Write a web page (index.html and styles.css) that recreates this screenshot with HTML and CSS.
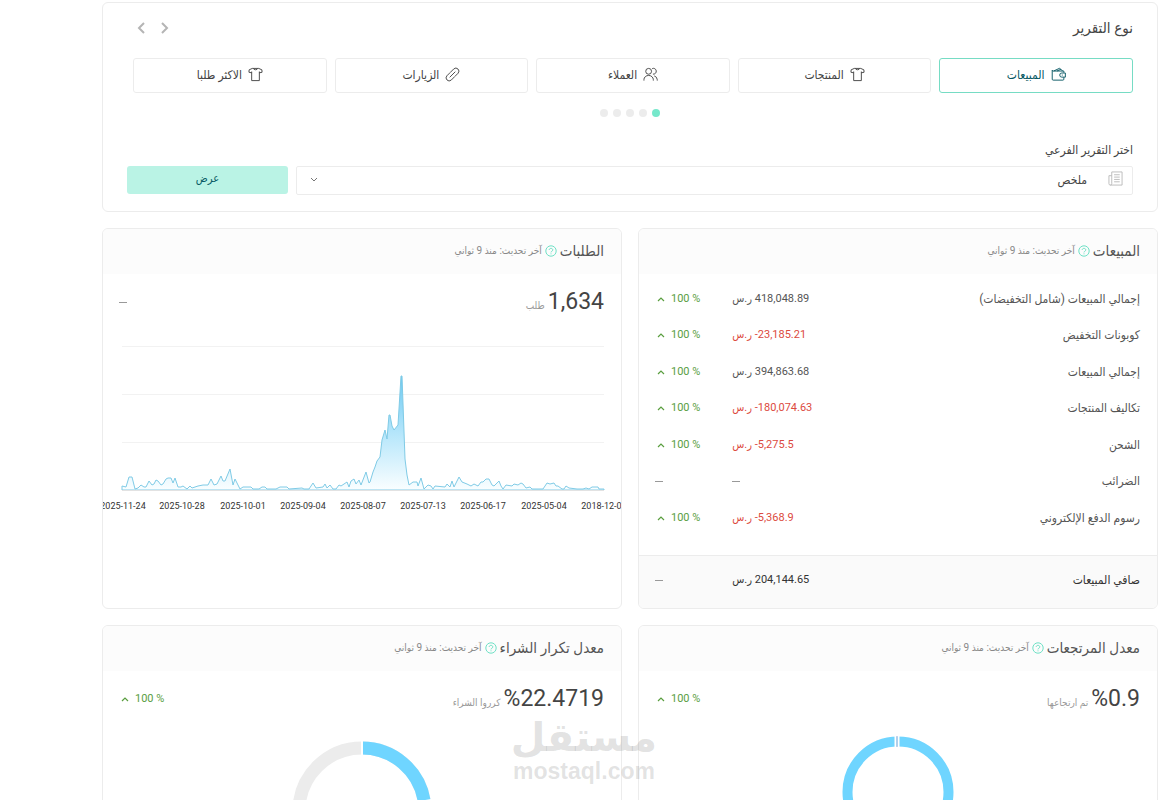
FILE: index.html
```html
<!DOCTYPE html>
<html lang="ar" dir="rtl">
<head>
<meta charset="utf-8">
<title>التقارير</title>
<link rel="stylesheet" href="styles.css">
</head>
<body>
<svg class="defs" aria-hidden="true">
  <symbol id="shirt" viewBox="0 0 16 16"><path d="M4.600 1.500 1.200 3 1 5.600 3.900 6.200V14.500H12.100V6.200L15 5.600 14.800 3 11.400 1.500zM5.600 1.600C6 3.400 10 3.400 10.400 1.600M3.900 4.800v1.600M12.100 4.800v1.600"/></symbol>
  <symbol id="help" viewBox="0 0 12 12"><circle cx="6" cy="6" r="5.2"/><path d="M4.2 5C4.2 2.8 7.8 2.8 7.8 5 7.8 6.2 6 6.1 6 7.4M6 8.4v.9"/></symbol>
  <symbol id="up" viewBox="0 0 8 6"><path d="M1 5 4 2l3 3"/></symbol>
</svg>
<main class="page">
  <section class="card filter">
    <header class="filter-head">
      <h1 class="filter-title">نوع التقرير</h1>
      <div class="arrows">
        <button class="arrow" aria-label="السابق"><svg class="arrow-icon" viewBox="0 0 10 14"><path d="m2 2 5 5-5 5"/></svg></button>
        <button class="arrow" aria-label="التالي"><svg class="arrow-icon" viewBox="0 0 10 14"><path d="M8 2 3 7l5 5"/></svg></button>
      </div>
    </header>
    <div class="types">
      <button class="type active"><svg class="type-icon" viewBox="0 0 16 16"><path d="M13.700 6V4.300H2.200a.9.900 0 0 1-.9-.9V13q0 1 1 1H12.700q1 0 1-1v-2M3 4.200 9 1.400l3.500 2.700M6.500 4.200 10.500 2.400M15.300 6.400h-3.800a2.200 2.200 0 0 0 0 4.400h3.800zM11.500 8.600h1"/></svg>المبيعات</button>
      <button class="type"><svg class="type-icon"><use href="#shirt"/></svg>المنتجات</button>
      <button class="type"><svg class="type-icon" viewBox="0 0 16 16"><circle cx="6" cy="4.600" r="3.100"/><path d="M1 14.500V13.500a5 4.500 0 0 1 10 0V14.500M9.800 1.700a3.100 3.100 0 1 1 .8 5.900M12 9.500a4.500 4.500 0 0 1 3.200 4V14.500"/></svg>العملاء</button>
      <button class="type"><svg class="type-icon" viewBox="0 0 16 16"><path d="m5 11 6-6M5.800 5.600 9.400 2a3.260 3.260 0 0 1 4.600 4.600l-3.600 3.600M10.200 10.400l-3.600 3.600a3.260 3.260 0 0 1-4.600-4.600l3.600-3.600"/></svg>الزيارات</button>
      <button class="type"><svg class="type-icon"><use href="#shirt"/></svg>الاكثر طلبا</button>
    </div>
    <div class="dots"><i class="dot on"></i><i class="dot"></i><i class="dot"></i><i class="dot"></i><i class="dot"></i></div>
    <label class="sub-label" for="sub">اختر التقرير الفرعي</label>
    <div class="sub-row">
      <div class="select-box">
        <svg class="doc-icon" viewBox="0 0 16 16"><path d="M4 1h11v14H2.500Q1 15 1 13.500V5h3M4 1v12.500Q4 15 2.500 15M6.500 4h6M6.500 6.500h6M6.500 9h6M6.500 11.500h6"/></svg>
        <select class="select" id="sub"><option>ملخص</option></select>
        <svg class="caret" viewBox="0 0 8 6"><path d="m1 1 3 3 3-3"/></svg>
      </div>
      <button class="show">عرض</button>
    </div>
  </section>

  <div class="grid">
    <section class="card">
      <header class="card-head"><h2 class="card-title">المبيعات</h2><svg class="help"><use href="#help"/></svg><span class="updated">آخر تحديث: منذ 9 ثواني</span></header>
      <table class="sales">
        <tbody>
          <tr><th scope="row">إجمالي المبيعات (شامل التخفيضات)</th><td class="val"><bdi dir="ltr">418,048.89</bdi> ر.س</td><td class="pct"><svg class="up"><use href="#up"/></svg>100 %</td></tr>
          <tr class="neg"><th scope="row">كوبونات التخفيض</th><td class="val"><bdi dir="ltr">-23,185.21</bdi> ر.س</td><td class="pct"><svg class="up"><use href="#up"/></svg>100 %</td></tr>
          <tr><th scope="row">إجمالي المبيعات</th><td class="val"><bdi dir="ltr">394,863.68</bdi> ر.س</td><td class="pct"><svg class="up"><use href="#up"/></svg>100 %</td></tr>
          <tr class="neg"><th scope="row">تكاليف المنتجات</th><td class="val"><bdi dir="ltr">-180,074.63</bdi> ر.س</td><td class="pct"><svg class="up"><use href="#up"/></svg>100 %</td></tr>
          <tr class="neg"><th scope="row">الشحن</th><td class="val"><bdi dir="ltr">-5,275.5</bdi> ر.س</td><td class="pct"><svg class="up"><use href="#up"/></svg>100 %</td></tr>
          <tr><th scope="row">الضرائب</th><td class="val"><i class="dash"></i></td><td class="pct"><i class="dash"></i></td></tr>
          <tr class="neg"><th scope="row">رسوم الدفع الإلكتروني</th><td class="val"><bdi dir="ltr">-5,368.9</bdi> ر.س</td><td class="pct"><svg class="up"><use href="#up"/></svg>100 %</td></tr>
        </tbody>
        <tfoot>
          <tr><th scope="row">صافي المبيعات</th><td class="val"><bdi dir="ltr">204,144.65</bdi> ر.س</td><td class="pct"><i class="dash"></i></td></tr>
        </tfoot>
      </table>
    </section>

    <section class="card">
      <header class="card-head"><h2 class="card-title">الطلبات</h2><svg class="help"><use href="#help"/></svg><span class="updated">آخر تحديث: منذ 9 ثواني</span></header>
      <div class="summary"><p class="figure"><span class="number">1,634</span><span class="unit">طلب</span></p><i class="dash"></i></div>
      <svg class="chart" viewBox="0 0 482 168">
        <defs><linearGradient id="fill" x1="0" y1="0" x2="0" y2="1"><stop offset="0" stop-color="#6cc9f2"/><stop offset=".5" stop-color="#b5e6fb"/><stop offset="1" stop-color="#fafeff"/></linearGradient></defs>
        <path class="gridline" d="M0 .5H482M0 48.500H482M0 96.500H482"/>
        <path class="area" d="M0 144V140L4 141 7 131 10 131 13 143 16 142 19 139 22 141 24 141 27 135 30 139 32 138 34 134 36 135 39 139 41 138 44 133 46 132 49 132 51 137 53 132 56 141 59 141 61 140 65 143 68 140 70 142 76 140 81 139 86 139 89 133 92 139 95 138 99 130 101 135 103 135 108 123 111 139 113 133 118 143 121 141 129 141 131 143 137 143 140 141 143 141 145 143 154 143 158 141 165 141 167 143 180 142 182 143 187 143 191 137 194 142 201 141 203 138 205 142 208 139 211 143 214 143 217 139 219 140 225 136 227 141 229 135 232 133 234 138 237 134 239 139 244 126 247 137 248 136 251 126 253 121 255 115 258 111 260 94 263 84 265 93 267 69 268 69 270 80 272 84 276 79 279 30 280 30 283 113 285 129 287 139 291 136 295 136 296 140 299 132 302 143 306 139 309 140 311 143 313 140 323 141 325 138 328 141 330 135 332 141 337 131 340 136 345 138 349 140 352 138 356 140 359 136 361 136 364 133 367 133 370 139 372 140 377 135 379 140 381 143 384 139 390 140 392 138 396 139 399 137 401 138 404 142 408 141 410 143 421 143 425 137 428 138 432 137 434 140 436 140 440 143 442 143 444 140 447 142 455 143 461 143 464 142 467 143 470 141 476 141 477 143 482 143V144z"/>
        <path class="axis" d="M0 144.500H482"/>
        <g class="tick"><text x="1" y="163">2025-11-24</text><text x="60" y="163">2025-10-28</text><text x="121" y="163">2025-10-01</text><text x="181" y="163">2025-09-04</text><text x="241" y="163">2025-08-07</text><text x="301" y="163">2025-07-13</text><text x="361" y="163">2025-06-17</text><text x="422" y="163">2025-05-04</text><text x="482" y="163">2018-12-01</text></g>
      </svg>
    </section>

    <section class="card">
      <header class="card-head"><h2 class="card-title">معدل المرتجعات</h2><svg class="help"><use href="#help"/></svg><span class="updated">آخر تحديث: منذ 9 ثواني</span></header>
      <div class="summary"><p class="figure"><span class="number">%0.9</span><span class="unit">تم ارتجاعها</span></p><span class="pct"><svg class="up"><use href="#up"/></svg>100 %</span></div>
      <svg class="donut small" viewBox="0 0 112 112"><circle class="ring" cx="56" cy="56" r="50.500" stroke-width="10"/><path class="cut" d="M53.500 0v12M56.500 0v12"/><path class="sliver" d="M55 0v11"/></svg>
    </section>

    <section class="card">
      <header class="card-head"><h2 class="card-title">معدل تكرار الشراء</h2><svg class="help"><use href="#help"/></svg><span class="updated">آخر تحديث: منذ 9 ثواني</span></header>
      <div class="summary"><p class="figure"><span class="number">%22.4719</span><span class="unit">كرروا الشراء</span></p><span class="pct"><svg class="up"><use href="#up"/></svg>100 %</span></div>
      <svg class="donut" viewBox="0 0 140 140"><circle class="ring rest" cx="70" cy="70" r="63" stroke-width="13"/><circle class="ring" cx="70" cy="70" r="63" stroke-width="13" pathLength="100" stroke-dasharray="22.470 100" transform="rotate(-90 70 70)"/><path class="cut" d="M70 0v15"/><path class="cut" d="M70 0v15" transform="rotate(81 70 70)"/></svg>
    </section>
  </div>
  <div class="watermark"><span class="wm-ar">مستقل</span><span class="wm-en" dir="ltr">mostaql.com</span></div>
</main>
</body>
</html>
```
FILE: styles.css
```css
* { box-sizing: border-box; }
body {
  margin: 0;
  background: #fff;
  color: #444;
  font-family: Roboto, "DejaVu Sans Condensed", "DejaVu Sans", sans-serif;
  font-size: 12px;
  line-height: 20px;
}
h1, h2, p { margin: 0; font-weight: 400; }
button, select { font: inherit; color: inherit; cursor: pointer; }
svg { fill: none; stroke: currentColor; flex: none; }
.defs { position: absolute; width: 0; height: 0; }
.page {
  position: relative;
  height: 100vh;
  overflow: hidden;
  padding: 2px 10px 0 102px;
}
.card {
  border: 1px solid #ececec;
  border-radius: 6px;
  background: #fff;
  overflow: hidden;
}

.filter { padding: 14px 24px 16px; }
.filter-head { display: flex; justify-content: space-between; align-items: center; height: 22px; }
.filter-title { font-size: 15px; line-height: 22px; }
.arrows { display: flex; gap: 14px; padding-left: 9px; }
.arrow { display: flex; padding: 0; border: 0; background: none; color: #b5b5b5; }
.arrow-icon { width: 10px; height: 14px; stroke-width: 2; }
.types {
  display: grid;
  grid-template-columns: repeat(5, 1fr);
  gap: 8px;
  margin: 19px 0 0 6px;
}
.type {
  display: flex;
  align-items: center;
  justify-content: center;
  gap: 6px;
  height: 35px;
  padding: 0 0 2px;
  border: 1px solid #ececec;
  border-radius: 3px;
  background: #fff;
}
.type.active { border-color: #76dcc4; color: #075863; }
.type-icon { width: 15px; height: 15px; stroke-width: 1; }
.dots { display: flex; justify-content: center; gap: 5px; margin-top: 16px; }
.dot { width: 8px; height: 8px; border-radius: 50%; background: #ececec; }
.dot.on { background: #76e8cb; }
.sub-label { display: block; margin-top: 23px; }
.sub-row { display: flex; gap: 8px; margin-top: 6px; }
.select-box { position: relative; flex: 1; }
.select {
  appearance: none;
  display: block;
  width: 100%;
  height: 29px;
  padding: 0 45px 2px 30px;
  border: 1px solid #ececec;
  border-radius: 2px;
  background: #fff;
}
.doc-icon { position: absolute; right: 10px; top: 5px; width: 15px; height: 15px; color: #bbb; }
.caret { position: absolute; left: 14px; top: 11px; width: 8px; height: 6px; color: #777; }
.show {
  width: 16%;
  height: 28px;
  padding: 0 0 2px;
  border: 0;
  border-radius: 3px;
  background: #baf3e5;
  color: #075863;
  font-size: 11px;
}

.grid { display: grid; grid-template-columns: 1fr 1fr; gap: 16px; margin-top: 16px; }
.card-head {
  display: flex;
  align-items: center;
  gap: 3px;
  height: 45px;
  padding: 0 17px 2px;
  background: #fcfcfc;
}
.card-title { font-size: 15px; color: #555; }
.help { width: 12px; height: 12px; color: #6fe0c5; }
.updated { font-size: 10px; color: #888; }

.sales { width: 100%; margin-top: 7px; border-collapse: collapse; color: #555; }
.sales th { width: 59%; padding: 8px 17px 8px 0; font-weight: 400; text-align: right; }
.sales td { padding: 8px 0; text-align: left; font-size: 11px; }
.sales tr:nth-child(even) > * { padding-bottom: 9px; }
.sales tbody tr:last-child > * { padding-bottom: 27px; }
.sales .pct { width: 18%; padding-left: 16px; }
.sales tfoot tr > * { padding-top: 14px; padding-bottom: 18px; border-top: 1px solid #ececec; background: #fafafa; }
.sales tfoot { color: #333; }
.neg .val { color: #dc4a40; }
.pct { color: #5a9e3f; direction: ltr; font-size: 11px; white-space: nowrap; }
.up { width: 8px; height: 6px; margin: 0 6px 0 2px; stroke-width: 1.2; }
.dash { display: inline-block; width: 8px; height: 1px; background: #999; vertical-align: middle; }

.summary { display: flex; justify-content: space-between; align-items: center; height: 56px; padding: 0 17px 0 16px; }
.figure { display: flex; align-items: baseline; gap: 3px; }
.number { direction: ltr; font-size: 23px; line-height: 30px; }
.unit { font-size: 10px; color: #999; }
.chart { display: block; width: auto; margin: 16px 17px 0 19px; overflow: visible; }
.gridline { stroke: #f2f2f2; }
.axis { stroke: #e2e2e2; }
.area { fill: url(#fill); stroke: #80cbe6; stroke-width: 1; }
.tick { fill: #333; stroke: none; font-size: 9px; text-anchor: middle; direction: ltr; }

.donut { display: block; width: 140px; height: 140px; margin: 14px auto 24px; }
.donut.small { width: 112px; height: 112px; margin-top: 9px; }
.ring { stroke: #6fd5ff; }
.rest { stroke: #ececec; }
.cut { stroke: #fff; stroke-width: 2; }
.sliver { stroke: #a9b4d8; }

.watermark {
  position: absolute;
  left: 513px;
  top: 717px;
  width: 142px;
  display: flex;
  flex-direction: column;
  align-items: center;
  color: rgba(110, 110, 110, .2);
  font-weight: 700;
  pointer-events: none;
}
.wm-ar { font-family: "DejaVu Sans", sans-serif; font-size: 40px; line-height: 40px; }
.wm-en { font-family: "Liberation Sans", sans-serif; font-size: 23px; line-height: 28px; }
```
